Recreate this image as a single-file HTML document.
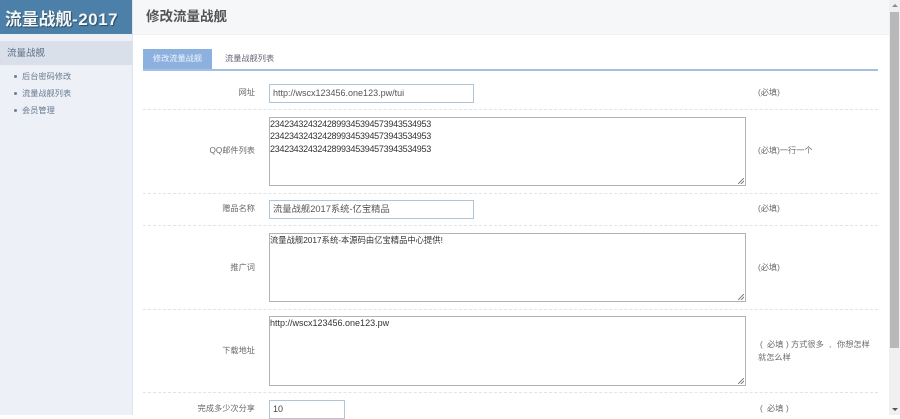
<!DOCTYPE html>
<html><head><meta charset="utf-8">
<style>
*{box-sizing:border-box}
html,body{margin:0;padding:0;width:900px;height:415px;overflow:hidden;background:#fff;font-family:"Liberation Sans","Noto Sans CJK SC",sans-serif;font-size:8.2px;color:#666}
.a{position:absolute;white-space:nowrap}
.in{position:absolute;background:#fff;border:1px solid #aec6d6;height:19px;padding-left:3px;line-height:17px;color:#555;font-size:9px;white-space:nowrap}
.ta{position:absolute;background:#fff;border:1px solid #b0b4b8;left:269px;width:477px;padding:0;line-height:12.3px;color:#333;font-size:9px;white-space:pre}
.ta:after{content:"";position:absolute;right:1px;bottom:1px;width:6px;height:6px;background:linear-gradient(135deg,transparent 45%,#888 45%,#888 55%,transparent 55%,transparent 70%,#888 70%,#888 80%,transparent 80%)}
.d{position:absolute;left:143px;width:735px;border-top:1px dashed #dde5ea;height:0}
.l{position:absolute;right:645px;text-align:right;white-space:nowrap;color:#6a6a6a;line-height:12px}
.r{position:absolute;left:758px;white-space:nowrap;color:#6a6a6a;line-height:12px}
.dot{position:absolute;left:14px;width:3px;height:3px;border-radius:50%;background:#6f7f95}
</style></head><body>
<div class="a" style="left:0;top:0;width:133px;height:415px;background:#edf1f7;border-right:1px solid #dfe5ee"></div>
<div class="a" style="left:0;top:0;width:132px;height:34px;background:#4d80a8"></div>
<div class="a" style="left:5px;top:9px;font-size:16.8px;line-height:22px;font-weight:bold;color:#f4f7f9;text-shadow:1px 1px 1px #2a4a60">流量战舰<span style="letter-spacing:.6px">-2017</span></div>
<div class="a" style="left:0;top:41px;width:132px;height:24px;background:#d9e0ea"></div>
<div class="a" style="left:7px;top:47px;font-size:9.5px;line-height:13px;color:#5f6f85">流量战舰</div>
<div class="dot" style="top:75px"></div><div class="a" style="left:22px;top:71px;line-height:12px;color:#6a7a90">后台密码修改</div>
<div class="dot" style="top:92px"></div><div class="a" style="left:22px;top:88px;line-height:12px;color:#6a7a90">流量战舰列表</div>
<div class="dot" style="top:109px"></div><div class="a" style="left:22px;top:105px;line-height:12px;color:#6a7a90">会员管理</div>

<div class="a" style="left:133px;top:0;width:756px;height:35px;background:#f6f7f9;border-bottom:1px solid #eef1f6"></div>
<div class="a" style="left:146px;top:7px;font-size:13.5px;line-height:20px;font-weight:bold;color:#555">修改流量战舰</div>

<div class="a" style="left:143px;top:49px;width:69px;height:20px;background:#8cb1de;color:#eef3fa;text-align:center;line-height:20px">修改流量战舰</div>
<div class="a" style="left:225px;top:53px;line-height:12px;color:#667">流量战舰列表</div>
<div class="a" style="left:143px;top:69px;width:735px;height:2px;background:#a3c0e4"></div>

<div class="l" style="top:87px">网址</div>
<div class="in" style="left:269px;top:84px;width:205px">http://wscx123456.one123.pw/tui</div>
<div class="r" style="top:87px">(必填)</div>
<div class="d" style="top:109px"></div>

<div class="l" style="top:145px">QQ邮件列表</div>
<div class="ta" style="top:117px;height:69px;letter-spacing:-.27px">2342343243242899345394573943534953
2342343243242899345394573943534953
2342343243242899345394573943534953</div>
<div class="r" style="top:145px">(必填)一行一个</div>
<div class="d" style="top:193px"></div>

<div class="l" style="top:203px">赠品名称</div>
<div class="in" style="left:269px;top:200px;width:205px;font-size:9.3px">流量战舰2017系统-亿宝精品</div>
<div class="r" style="top:203px">(必填)</div>
<div class="d" style="top:225px"></div>

<div class="l" style="top:262px">推广词</div>
<div class="ta" style="top:233px;height:69px;font-size:8.3px">流量战舰2017系统-本源码由亿宝精品中心提供!</div>
<div class="r" style="top:262px">(必填)</div>
<div class="d" style="top:309px"></div>

<div class="l" style="top:345px">下载地址</div>
<div class="ta" style="top:316px;height:70px">http://wscx123456.one123.pw</div>
<div class="r" style="top:339px;left:760px">(</div>
<div class="r" style="top:339px;left:767px">必填</div>
<div class="r" style="top:339px;left:786px">)</div>
<div class="r" style="top:339px;left:791px">方式很多</div>
<div class="r" style="top:339px;left:829px">,</div>
<div class="r" style="top:339px;left:837px">你想怎样</div>
<div class="r" style="top:352px">就怎么样</div>
<div class="d" style="top:392px"></div>

<div class="l" style="top:403px">完成多少次分享</div>
<div class="in" style="left:269px;top:400px;width:76px;color:#444">10</div>
<div class="r" style="top:403px;left:760px">(</div>
<div class="r" style="top:403px;left:767px">必填</div>
<div class="r" style="top:403px;left:786px">)</div>

<div class="a" style="left:889px;top:0;width:11px;height:415px;background:#f0f0f0"></div>
<div class="a" style="left:890px;top:12px;width:9px;height:336px;background:#b8b8b8"></div>
<div class="a" style="left:892px;top:4px;width:0;height:0;border-left:3px solid transparent;border-right:3px solid transparent;border-bottom:3px solid #8a8a8a"></div>
<div class="a" style="left:892px;top:408px;width:0;height:0;border-left:3px solid transparent;border-right:3px solid transparent;border-top:3px solid #555"></div>
</body></html>
